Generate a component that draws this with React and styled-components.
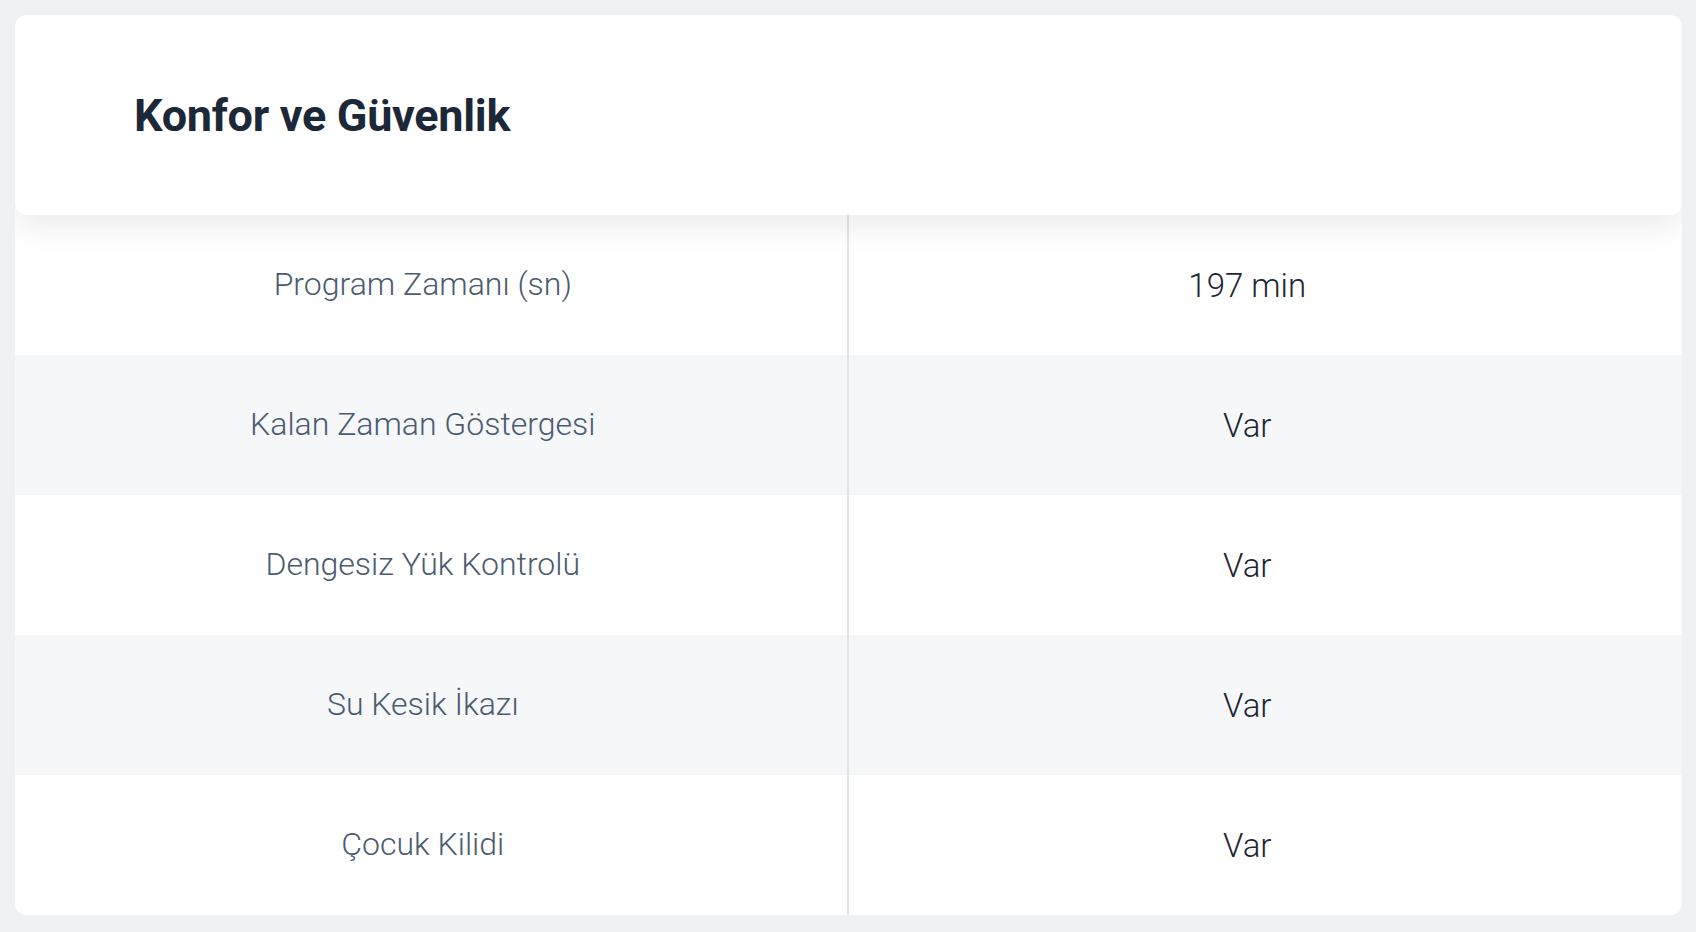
import React from 'react';
import styled, { createGlobalStyle } from 'styled-components';

const GlobalStyle = createGlobalStyle`
  html, body {
    margin: 0;
    padding: 0;
    background: #f0f1f3;
    font-family: Roboto, "Noto Sans", "Liberation Sans", sans-serif;
  }
`;

const Page = styled.div`
  padding: 15px 14px 17px 15px;
`;

const Card = styled.section`
  background: #ffffff;
  border-radius: 12px;
  overflow: hidden;
`;

const Header = styled.header`
  position: relative;
  z-index: 1;
  height: 200px;
  display: flex;
  align-items: center;
  padding-left: 119px;
  background: #ffffff;
  border-radius: 12px;
  box-shadow: 0 12px 32px rgba(0, 0, 0, 0.08);
`;

const Title = styled.h2`
  margin: 0;
  font-size: 45px;
  font-weight: 700;
  color: #1c2837;
  letter-spacing: -0.3px;
`;

const Table = styled.div`
  display: grid;
  grid-template-columns: 1fr 1fr;
`;

const Row = styled.div`
  display: contents;
`;

const Cell = styled.div`
  height: 140px;
  box-sizing: border-box;
  display: flex;
  align-items: center;
  justify-content: center;
  background: ${p => (p.$striped ? '#f6f7f9' : '#ffffff')};
  border-right: ${p => (p.$value ? 'none' : '2px solid #e3e4e6')};
  padding-right: ${p => (p.$value ? '36px' : '16px')};
  padding-bottom: ${p => (p.$value ? '0' : '3px')};
  font-weight: 300;
  font-size: ${p => (p.$value ? '33px' : '32px')};
  color: ${p => (p.$value ? '#1d2633' : '#4b5b70')};
`;

const rows = [
  ['Program Zamanı (sn)', '197 min'],
  ['Kalan Zaman Göstergesi', 'Var'],
  ['Dengesiz Yük Kontrolü', 'Var'],
  ['Su Kesik İkazı', 'Var'],
  ['Çocuk Kilidi', 'Var'],
];

export default function App() {
  return (
    <>
      <GlobalStyle />
      <Page>
        <Card>
          <Header>
            <Title>Konfor ve Güvenlik</Title>
          </Header>
          <Table>
            {rows.map(([label, value], i) => (
              <Row key={label}>
                <Cell $striped={i % 2 === 1}>{label}</Cell>
                <Cell $striped={i % 2 === 1} $value>{value}</Cell>
              </Row>
            ))}
          </Table>
        </Card>
      </Page>
    </>
  );
}
